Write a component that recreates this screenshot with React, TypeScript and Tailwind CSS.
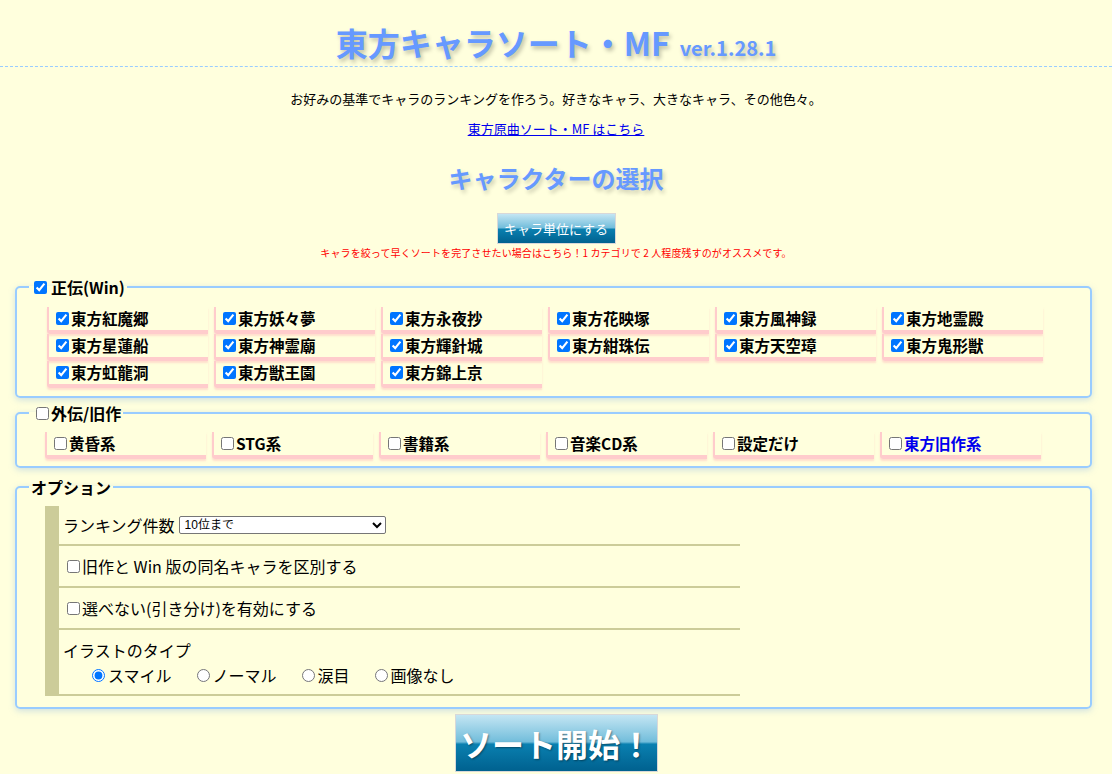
import React from 'react'

const jp = '[font-family:"Noto_Sans_CJK_JP","Noto_Sans",sans-serif]'

const winTitles = [
  '東方紅魔郷', '東方妖々夢', '東方永夜抄', '東方花映塚', '東方風神録', '東方地霊殿',
  '東方星蓮船', '東方神霊廟', '東方輝針城', '東方紺珠伝', '東方天空璋', '東方鬼形獣',
  '東方虹龍洞', '東方獣王園', '東方錦上京',
]

const otherTitles = ['黄昏系', 'STG系', '書籍系', '音楽CD系', '設定だけ', '東方旧作系']

function Item({ label, checked, blue }: { label: string; checked?: boolean; blue?: boolean }) {
  return (
    <label className="flex items-center h-[27px] pl-[7px] border-l-[2px] border-b-[4px] border-[#ffcccc] rounded-bl-[3px] shadow-[0_2px_2px_rgba(255,190,190,0.5)] w-[161px]">
      <input type="checkbox" defaultChecked={checked} className="w-[13px] h-[13px] m-0 mr-[2px] accent-[#0075ff]" />
      <span className={`text-[15.5px] font-bold ${blue ? 'text-[#0000ee]' : 'text-black'}`}>{label}</span>
    </label>
  )
}

function Box({ legend, children }: { legend: React.ReactNode; children: React.ReactNode }) {
  return (
    <fieldset className="ml-[15px] mr-[20px] border-2 border-[#99ccff] rounded-[5px] shadow-[0_2px_6px_rgba(120,170,230,0.35)]">
      <legend className="ml-[12px] px-[2px] text-[16px] font-bold text-black leading-[20px]">{legend}</legend>
      {children}
    </fieldset>
  )
}

const gradBtn = 'bg-[linear-gradient(#c4e6f3,#72bddb_48%,#0a80b0_52%,#00618f)] border border-[#d8d8d8] text-white font-bold'

export default function App() {
  return (
    <div className={`min-h-screen bg-[#ffffdd] text-black ${jp}`}>
      {/* title */}
      <h1 className="text-center pt-[22px] pb-[3px] border-b border-dashed border-[#99ccff] text-[#6699ff] font-bold [text-shadow:2px_3px_4px_rgba(0,0,0,0.25)]">
        <span className="text-[32px] leading-[40px]">東方キャラソート・MF</span>
        <span className="text-[20px] ml-[10px]">ver.1.28.1</span>
      </h1>

      <p className="text-center text-[13px] mt-[22px]">お好みの基準でキャラのランキングを作ろう。好きなキャラ、大きなキャラ、その他色々。</p>
      <p className="text-center text-[13px] mt-[10px]">
        <a href="#" className="text-[#0000ee] underline">東方原曲ソート・MF はこちら</a>
      </p>

      <h2 className="text-center text-[24px] font-bold text-[#6699ff] mt-[22px] [text-shadow:2px_3px_4px_rgba(0,0,0,0.2)]">キャラクターの選択</h2>

      <div className="flex justify-center mt-[17px]">
        <button className={`${gradBtn} w-[119px] h-[31px] text-[13px] font-normal`}>キャラ単位にする</button>
      </div>
      <p className="text-center text-[10px] text-[#ff0000] mt-[1px] tracking-[0.1px]">キャラを絞って早くソートを完了させたい場合はこちら！1 カテゴリで 2 人程度残すのがオススメです。</p>

      <div className="mt-[17px]">
        <Box
          legend={
            <span className="flex items-center gap-[4px] ml-[3px]">
              <input type="checkbox" defaultChecked className="w-[13px] h-[13px] m-0 accent-[#0075ff]" />
              正伝(Win)
            </span>
          }
        >
          <div className="grid grid-cols-[repeat(6,167px)] pl-[30px] pt-[10px] pb-[8px]">
            {winTitles.map((t) => (
              <Item key={t} label={t} checked />
            ))}
          </div>
        </Box>
      </div>

      <div className="mt-[5px]">
        <Box
          legend={
            <span className="flex items-center gap-[2px] ml-[5px]">
              <input type="checkbox" className="w-[13px] h-[13px] m-0" />
              外伝/旧作
            </span>
          }
        >
          <div className="grid grid-cols-[repeat(6,167px)] pl-[28px] pt-[9px] pb-[7px]">
            {otherTitles.map((t) => (
              <Item key={t} label={t} blue={t === '東方旧作系'} />
            ))}
          </div>
        </Box>
      </div>

      <div className="mt-[9px]">
        <Box legend={<span>オプション</span>}>
          <div className="ml-[28px] mr-[350px] mt-[9px] mb-[11px] border-l-[14px] border-b-2 border-[#cccc99] text-[16px]">
            <div className="h-[40px] flex items-center pl-[4px] border-b-2 border-[#cccc99]">
              ランキング件数
              <select className="ml-[4px] w-[207px] h-[18px] text-[12px] bg-white border border-[#767676] rounded-[2px] px-[1px] [font-family:'Liberation_Sans','Noto_Sans_CJK_JP',sans-serif]">
                <option>10位まで</option>
              </select>
            </div>
            <label className="h-[42px] flex items-center pl-[8px] border-b-2 border-[#cccc99]">
              <input type="checkbox" className="w-[13px] h-[13px] m-0 mr-[2px]" />
              旧作と Win 版の同名キャラを区別する
            </label>
            <label className="h-[42px] flex items-center pl-[8px] border-b-2 border-[#cccc99]">
              <input type="checkbox" className="w-[13px] h-[13px] m-0 mr-[2px]" />
              選べない(引き分け)を有効にする
            </label>
            <div className="h-[64px] pl-[4px] pt-[8px]">
              <div>イラストのタイプ</div>
              <div className="flex items-center pl-[29px] mt-[1px]">
                {['スマイル', 'ノーマル', '涙目', '画像なし'].map((r, i) => (
                  <label key={r} className="flex items-center mr-[25px]">
                    <input type="radio" name="illust" defaultChecked={i === 0} className="w-[13px] h-[13px] m-0 mr-[3px] accent-[#0075ff]" />
                    {r}
                  </label>
                ))}
              </div>
            </div>
          </div>
        </Box>
      </div>

      <div className="flex justify-center mt-[5px]">
        <button className={`${gradBtn} w-[203px] h-[58px] text-[32px] [text-shadow:1px_1px_2px_rgba(0,0,0,0.4)]`}>ソート開始！</button>
      </div>
    </div>
  )
}
